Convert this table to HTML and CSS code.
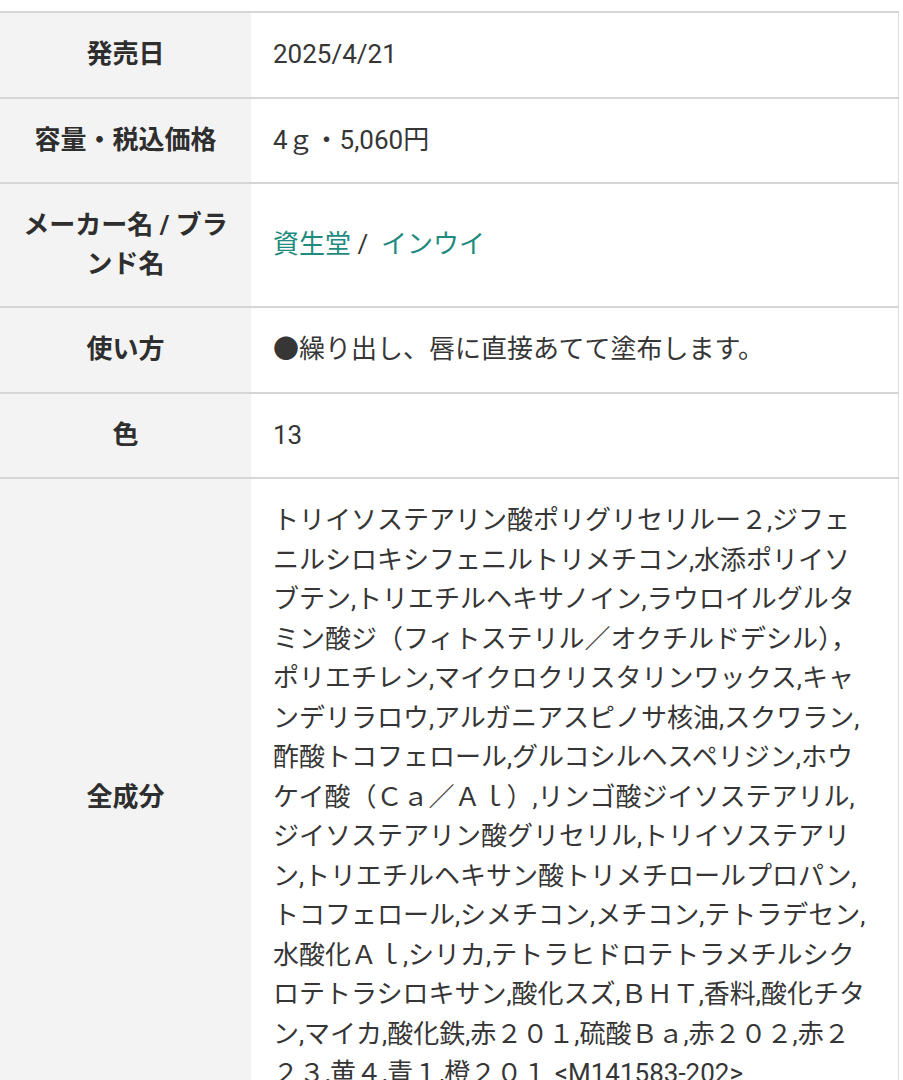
FILE: index.html
```html
<!DOCTYPE html>
<html lang="ja">
<head>
<meta charset="utf-8">
<title>商品情報</title>
<link rel="stylesheet" href="styles.css">
</head>
<body>
<div class="page">
  <table class="spec">
    <tbody>
      <tr>
        <th class="spec-label">発売日</th>
        <td class="spec-value">2025/4/21</td>
      </tr>
      <tr>
        <th class="spec-label">容量・税込価格</th>
        <td class="spec-value">4ｇ・5,060円</td>
      </tr>
      <tr>
        <th class="spec-label">メーカー名 / ブランド名</th>
        <td class="spec-value"><a class="spec-link" href="#">資生堂</a> /&nbsp; <a class="spec-link" href="#">インウイ</a></td>
      </tr>
      <tr>
        <th class="spec-label">使い方</th>
        <td class="spec-value">●繰り出し、唇に直接あてて塗布します。</td>
      </tr>
      <tr>
        <th class="spec-label">色</th>
        <td class="spec-value">13</td>
      </tr>
      <tr>
        <th class="spec-label">全成分</th>
        <td class="spec-value spec-long">トリイソステアリン酸ポリグリセリルー２,ジフェニルシロキシフェニルトリメチコン,水添ポリイソブテン,トリエチルヘキサノイン,ラウロイルグルタミン酸ジ（フィトステリル／オクチルドデシル），ポリエチレン,マイクロクリスタリンワックス,キャンデリラロウ,アルガニアスピノサ核油,スクワラン,酢酸トコフェロール,グルコシルヘスペリジン,ホウケイ酸（Ｃａ／Ａｌ）,リンゴ酸ジイソステアリル,ジイソステアリン酸グリセリル,トリイソステアリン,トリエチルヘキサン酸トリメチロールプロパン,トコフェロール,シメチコン,メチコン,テトラデセン,水酸化Ａｌ,シリカ,テトラヒドロテトラメチルシクロテトラシロキサン,酸化スズ,ＢＨＴ,香料,酸化チタン,マイカ,酸化鉄,赤２０１,硫酸Ｂａ,赤２０２,赤２２３,黄４,青１,橙２０１ &lt;M141583-202&gt;</td>
      </tr>
    </tbody>
  </table>
</div>
</body>
</html>
```
FILE: styles.css
```css
html, body {
  margin: 0;
  padding: 0;
  background: #ffffff;
}

body {
  font-family: Roboto, "Noto Sans CJK JP", sans-serif;
  color: #333333;
}

.page {
  padding-top: 11px;
}

.spec {
  width: 899px;
  border-collapse: collapse;
  border-top: 2px solid #d6d6d6;
  border-right: 1px solid #dedede;
  table-layout: fixed;
}

.spec-label {
  width: 251px;
  box-sizing: border-box;
  background: #f3f3f3;
  font-size: 26px;
  font-weight: 700;
  line-height: 39px;
  text-align: center;
  vertical-align: middle;
  padding: 22px 16px;
  border-bottom: 2px solid #d6d6d6;
  color: #2e2e2e;
}

.spec-value {
  font-size: 26px;
  font-weight: 400;
  line-height: 39.5px;
  text-align: left;
  vertical-align: middle;
  padding: 22px 24px 22px 22px;
  border-bottom: 2px solid #d6d6d6;
  color: #363636;
  word-break: break-all;
}

.spec-link {
  color: #1e8b7e;
  text-decoration: none;
}
```
